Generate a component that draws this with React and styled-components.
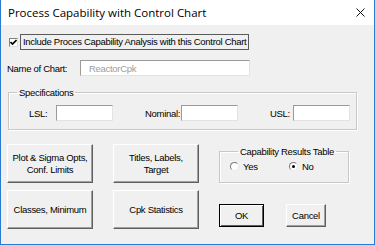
import React from "react";
import styled, { createGlobalStyle } from "styled-components";

const GlobalStyle = createGlobalStyle`
html, body {
margin: 0;
padding: 0;
background: #ffffff;
}
`;

function CheckMark() {
    return (
        <svg width="7" height="7" viewBox="0 0 7 7">
            <path d="M0.5 3 L2.5 5 L6.5 1" stroke="#000" strokeWidth="1.6" fill="none" />
        </svg>
    );
}

function CloseIcon() {
    return (
        <svg width="9" height="9" viewBox="0 0 9 9">
            <path d="M0.5 0.5 L8.5 8.5 M8.5 0.5 L0.5 8.5" stroke="#111" strokeWidth="1" />
        </svg>
    );
}

function SpecField({ label, labelWidth }) {
    return (
        <SpecItem>
            <FieldLabel $width={labelWidth}>{label}</FieldLabel>
            <TextBox $width={57} />
        </SpecItem>
    );
}

function App() {
    return (
        <>
            <GlobalStyle />
            <Window>
                <TitleBar>
                    <Title>Process Capability with Control Chart</Title>
                    <CloseButton><CloseIcon /></CloseButton>
                </TitleBar>
                <Body>
                    <CheckRow>
                        <CheckBox><CheckMark /></CheckBox>
                        <FocusLabel>Include Proces Capability Analysis with this Control Chart</FocusLabel>
                    </CheckRow>

                    <NameRow>
                        <FieldLabel $width={73}>Name of Chart:</FieldLabel>
                        <TextBox $width={170}>
                            <Placeholder>ReactorCpk</Placeholder>
                        </TextBox>
                    </NameRow>

                    <SpecGroup>
                        <GroupLegend>Specifications</GroupLegend>
                        <SpecRow>
                            <SpecField label="LSL:" labelWidth={27} />
                            <SpecField label="Nominal:" labelWidth={36} />
                            <SpecField label="USL:" labelWidth={23} />
                        </SpecRow>
                    </SpecGroup>

                    <BottomGrid>
                        <ActionButton>Plot &amp; Sigma Opts,<br />Conf. Limits</ActionButton>
                        <ActionButton>Titles, Labels,<br />Target</ActionButton>
                        <RightTop>
                            <ResultsGroup>
                                <GroupLegend>Capability Results Table</GroupLegend>
                                <RadioRow>
                                    <RadioItem>
                                        <Radio />
                                        Yes
                                    </RadioItem>
                                    <RadioItem>
                                        <Radio $checked />
                                        No
                                    </RadioItem>
                                </RadioRow>
                            </ResultsGroup>
                        </RightTop>
                        <ActionButton>Classes, Minimum</ActionButton>
                        <ActionButton>Cpk Statistics</ActionButton>
                        <DialogButtons>
                            <DialogButton $default $width={45}>OK</DialogButton>
                            <DialogButton $width={40}>Cancel</DialogButton>
                        </DialogButtons>
                    </BottomGrid>
                </Body>
            </Window>
        </>
    );
}

const Window = styled.div`
width: 375px;
height: 245px;
box-sizing: border-box;
border: 1px solid #2b7bd4;
border-top: none;
background: #f0f0f0;
display: flex;
flex-direction: column;
font-family: "Liberation Sans", Arial, sans-serif;
font-size: 9.5px;
letter-spacing: -0.3px;
color: #000;
overflow: hidden;
`;

const TitleBar = styled.div`
height: 25px;
background: #ffffff;
display: flex;
align-items: center;
justify-content: space-between;
padding: 0 9px 0 7px;
flex-shrink: 0;
letter-spacing: 0;
`;

const Title = styled.div`
font-family: "Open Sans", "Noto Sans", sans-serif;
font-size: 11.5px;
color: #000;
`;

const CloseButton = styled.div`
width: 9px;
height: 9px;
display: flex;
margin-top: -1px;
`;

const Body = styled.div`
flex: 1;
padding: 9px 17px 0 6px;
display: flex;
flex-direction: column;
`;

const CheckRow = styled.div`
display: flex;
align-items: center;
height: 16px;
padding-left: 2px;
`;

const CheckBox = styled.span`
width: 9px;
height: 9px;
box-sizing: border-box;
background: #fff;
border: 1px solid;
border-color: #808080 #e0e0e0 #e0e0e0 #808080;
display: flex;
align-items: center;
justify-content: center;
margin-right: 2px;
`;

const FocusLabel = styled.span`
border: 1px solid #5a5a5a;
height: 16px;
box-sizing: border-box;
padding: 0 2px 0 2px;
line-height: 14px;
white-space: nowrap;
`;

const NameRow = styled.div`
display: flex;
align-items: center;
margin-top: 10px;
`;

const FieldLabel = styled.span`
width: ${(p) => p.$width}px;
white-space: nowrap;
`;

const TextBox = styled.div`
width: ${(p) => p.$width}px;
height: 16px;
box-sizing: border-box;
background: #fff;
border: 1px solid;
border-color: #9a9a9a #e3e3e3 #e3e3e3 #9a9a9a;
display: flex;
align-items: center;
padding-left: 8px;
`;

const Placeholder = styled.span`
color: #9d9d9d;
`;

const SpecGroup = styled.fieldset`
margin: 11px 0 0 1px;
padding: 7px 0 0 0;
height: 43px;
box-sizing: border-box;
border: 1px solid #c8c8c8;
box-shadow: inset 1px 1px 0 #fff, 1px 1px 0 #fff;
min-width: 0;
`;

const GroupLegend = styled.legend`
margin-left: 8px;
padding: 0 2px;
line-height: 11px;
height: 11px;
`;

const SpecRow = styled.div`
display: flex;
align-items: center;
gap: 32px;
padding-left: 20px;
`;

const SpecItem = styled.div`
display: flex;
align-items: center;
`;

const BottomGrid = styled.div`
display: grid;
grid-template-columns: 86px 86px 1fr;
grid-template-rows: 39px 39px;
column-gap: 20px;
row-gap: 7px;
margin-top: 14px;
`;

const ActionButton = styled.div`
box-sizing: border-box;
border: 1px solid;
border-color: #fff #5f5f5f #5f5f5f #fff;
box-shadow: inset -1px -1px 0 #a0a0a0;
background: #f0f0f0;
display: flex;
align-items: center;
justify-content: center;
text-align: center;
line-height: 12px;
`;

const RightTop = styled.div`
padding-top: 2px;
`;

const ResultsGroup = styled.fieldset`
margin: 0;
padding: 0 0 0 10px;
width: 130px;
height: 37px;
box-sizing: border-box;
border: 1px solid #c8c8c8;
box-shadow: inset 1px 1px 0 #fff, 1px 1px 0 #fff;
min-width: 0;
`;

const RadioRow = styled.div`
display: flex;
align-items: center;
margin-top: 4px;
`;

const RadioItem = styled.div`
display: flex;
align-items: center;
width: 59px;
`;

const Radio = styled.span`
width: 9px;
height: 9px;
box-sizing: border-box;
border-radius: 50%;
border: 1px solid;
border-color: #7a7a7a #e8e8e8 #e8e8e8 #7a7a7a;
background: #fff;
margin-right: 4px;
position: relative;
&::after {
content: "";
display: ${(p) => (p.$checked ? "block" : "none")};
position: absolute;
left: 2px;
top: 2px;
width: 3px;
height: 3px;
border-radius: 50%;
background: #000;
}
`;

const DialogButtons = styled.div`
display: flex;
align-items: flex-start;
gap: 22px;
padding-top: 14px;
`;

const DialogButton = styled.div`
width: ${(p) => p.$width}px;
height: 23px;
box-sizing: border-box;
border: 1px solid;
border-color: ${(p) => (p.$default ? "#000" : "#fff #5f5f5f #5f5f5f #fff")};
box-shadow: ${(p) => (p.$default ? "inset 1px 1px 0 #fff, inset -1px -1px 0 #5f5f5f" : "inset -1px -1px 0 #a0a0a0")};
display: flex;
align-items: center;
justify-content: center;
`;

export default App;
